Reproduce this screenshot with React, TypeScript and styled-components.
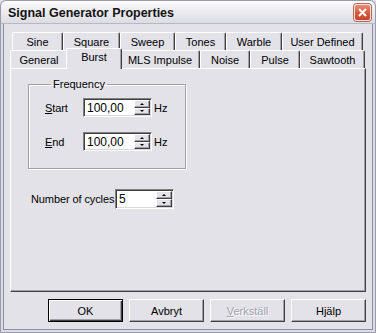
import React from "react";
import styled, { createGlobalStyle, css } from "styled-components";

const BG = "#e2e2e8";

const Global = createGlobalStyle`
  html, body { margin: 0; padding: 0; background: ${BG}; }
  body { font-family: "Liberation Sans", Arial, sans-serif; font-size: 11px; color: #000; }
  * { box-sizing: border-box; }
`;

const Window = styled.div`
  width: 376px;
  height: 333px;
  display: flex;
  flex-direction: column;
  background: ${BG};
  overflow: hidden;
`;

const TitleBar = styled.div`
  height: 24px;
  flex: none;
  display: flex;
  align-items: center;
  justify-content: space-between;
  padding: 0 4px 0 7px;
  background: linear-gradient(#fcfcfd 0%, #ededf1 45%, #dcdce3 100%);
  border: 1px solid #9a9aaa;
  border-bottom: 1px solid #b8b8c4;
  border-radius: 6px 6px 0 0;
`;

const Title = styled.div`
  font-weight: bold;
  font-size: 12.5px;
  color: #141414;
  padding-top: 1px;
`;

const CloseButton = styled.div`
  width: 17px;
  height: 17px;
  margin-top: 1px;
  border-radius: 3px;
  border: 1px solid #f3e3dd;
  background: linear-gradient(#ec8b72 0%, #d9593c 55%, #c6432a 100%);
  box-shadow: 0 0 0 1px #b5695a;
  display: flex;
  align-items: center;
  justify-content: center;
`;

const Frame = styled.div`
  flex: 1;
  display: flex;
  flex-direction: column;
  padding: 8px 9px 0 9px;
  border: 1px solid #9a9aaa;
  border-top: none;
  box-shadow: inset 2px 0 #dcdce4, inset -2px 0 #dcdce4, inset 0 -2px #dcdce4,
    inset 3px 0 #8e8ea0, inset -3px 0 #8e8ea0, inset 0 -3px #8e8ea0;
`;

const TabRow = styled.div<{ $indent: number }>`
  display: flex;
  height: 18px;
  margin-left: ${(p) => p.$indent}px;
`;

const Tab = styled.div<{ $w: number; $active?: boolean }>`
  width: ${(p) => p.$w}px;
  height: 18px;
  flex: none;
  display: flex;
  align-items: center;
  justify-content: center;
  background: ${BG};
  border-top: 1px solid #fff;
  border-left: 1px solid #fff;
  border-right: 1px solid #404040;
  box-shadow: inset -1px 0 #a0a0a8;
  border-radius: 2px 2px 0 0;
  padding-top: 1px;
  white-space: nowrap;
  ${(p) =>
    p.$active &&
    css`
      position: relative;
      z-index: 1;
      height: 21px;
      margin: -2px -2px -1px -2px;
      width: ${p.$w + 4}px;
      align-items: flex-start;
      padding-top: 2px;
    `}
`;

const Panel = styled.div`
  height: 224px;
  display: flex;
  flex-direction: column;
  align-items: flex-start;
  padding: 9px 0 0 17px;
  border-top: 1px solid #fff;
  border-left: 1px solid #fff;
  border-right: 1px solid #404040;
  border-bottom: 1px solid #404040;
  box-shadow: inset -1px -1px #a0a0a8;
`;

const Group = styled.fieldset`
  margin: 0;
  width: 158px;
  height: 91px;
  padding: 7px 0 0 16px;
  min-width: 0;
  border: 1px solid #a0a0a8;
  box-shadow: inset 1px 1px #fff, 1px 1px #fff;
  display: flex;
  flex-direction: column;
  gap: 15px;
`;

const Legend = styled.legend`
  margin-left: 6px;
  padding: 0 2px;
  line-height: 13px;
`;

const FieldRow = styled.div`
  display: flex;
  align-items: center;
  height: 19px;
`;

const Label = styled.span<{ $w: number }>`
  width: ${(p) => p.$w}px;
  flex: none;
  white-space: nowrap;
  letter-spacing: -0.1px;
`;

const Unit = styled.span`
  margin-left: 2px;
`;

const SpinBox = styled.div<{ $w: number; $h: number }>`
  width: ${(p) => p.$w}px;
  height: ${(p) => p.$h}px;
  display: flex;
  align-items: stretch;
  background: #fff;
  border-top: 1px solid #808080;
  border-left: 1px solid #808080;
  border-bottom: 1px solid #fff;
  border-right: 1px solid #fff;
  box-shadow: inset 1px 1px #404040, inset -1px -1px #d8d8de;
  padding: 1px;
`;

const SpinText = styled.div`
  flex: 1;
  display: flex;
  align-items: center;
  padding-left: 2px;
  font-size: 12px;
`;

const SpinButtons = styled.div`
  width: 16px;
  display: flex;
  flex-direction: column;
`;

const SpinButton = styled.div`
  flex: 1;
  display: flex;
  align-items: center;
  justify-content: center;
  background: ${BG};
  border-top: 1px solid #fff;
  border-left: 1px solid #fff;
  border-right: 1px solid #404040;
  border-bottom: 1px solid #404040;
  box-shadow: inset -1px -1px #a0a0a8;
`;

const Arrow = styled.div<{ $up?: boolean }>`
  width: 0;
  height: 0;
  border-left: 2px solid transparent;
  border-right: 2px solid transparent;
  ${(p) =>
    p.$up
      ? css`border-bottom: 2px solid #000;`
      : css`border-top: 2px solid #000;`}
`;

const CyclesRow = styled.div`
  display: flex;
  align-items: center;
  margin: 20px 0 0 3px;
`;

const ButtonRow = styled.div`
  display: flex;
  justify-content: flex-end;
  gap: 6px;
  margin-top: 7px;
`;

const Button = styled.div<{ $default?: boolean; $disabled?: boolean }>`
  width: 75px;
  height: 23px;
  display: flex;
  align-items: center;
  justify-content: center;
  background: ${BG};
  border: 1px solid;
  border-color: #fff #404040 #404040 #fff;
  box-shadow: inset -1px -1px #a0a0a8;
  ${(p) =>
    p.$default &&
    css`
      border-color: #000;
      box-shadow: inset 1px 1px #fff, inset -1px -1px #404040, inset -2px -2px #a0a0a8;
    `}
  ${(p) =>
    p.$disabled &&
    css`
      color: #a2a2aa;
      text-shadow: 1px 1px #fff;
    `}
`;

const Spin = ({ value, w, h }: { value: string; w: number; h: number }) => (
  <SpinBox $w={w} $h={h}>
    <SpinText>{value}</SpinText>
    <SpinButtons>
      <SpinButton>
        <Arrow $up />
      </SpinButton>
      <SpinButton>
        <Arrow />
      </SpinButton>
    </SpinButtons>
  </SpinBox>
);

const row1 = [
  { t: "Sine", w: 51 },
  { t: "Square", w: 57 },
  { t: "Sweep", w: 55 },
  { t: "Tones", w: 51 },
  { t: "Warble", w: 56 },
  { t: "User Defined", w: 81 },
];
const row2 = [
  { t: "General", w: 58 },
  { t: "Burst", w: 52, a: true },
  { t: "MLS Impulse", w: 80 },
  { t: "Noise", w: 50 },
  { t: "Pulse", w: 50 },
  { t: "Sawtooth", w: 65 },
];

export default function App() {
  return (
    <>
      <Global />
      <Window>
        <TitleBar>
          <Title>Signal Generator Properties</Title>
          <CloseButton>
            <svg width="9" height="9" viewBox="0 0 9 9">
              <path d="M1 1 L8 8 M8 1 L1 8" stroke="#fff" strokeWidth="2" />
            </svg>
          </CloseButton>
        </TitleBar>
        <Frame>
          <TabRow $indent={2}>
            {row1.map((t) => (
              <Tab key={t.t} $w={t.w}>
                {t.t}
              </Tab>
            ))}
          </TabRow>
          <TabRow $indent={0}>
            {row2.map((t) => (
              <Tab key={t.t} $w={t.w} $active={t.a}>
                {t.t}
              </Tab>
            ))}
          </TabRow>
          <Panel>
            <Group>
              <Legend>Frequency</Legend>
              <FieldRow>
                <Label $w={38}>
                  <u>S</u>tart
                </Label>
                <Spin value="100,00" w={69} h={19} />
                <Unit>Hz</Unit>
              </FieldRow>
              <FieldRow>
                <Label $w={38}>
                  <u>E</u>nd
                </Label>
                <Spin value="100,00" w={69} h={19} />
                <Unit>Hz</Unit>
              </FieldRow>
            </Group>
            <CyclesRow>
              <Label $w={84}>Number of cycles</Label>
              <Spin value="5" w={59} h={20} />
            </CyclesRow>
          </Panel>
          <ButtonRow>
            <Button $default>OK</Button>
            <Button>Avbryt</Button>
            <Button $disabled>
              <span>
                <u>V</u>erkställ
              </span>
            </Button>
            <Button>Hjälp</Button>
          </ButtonRow>
        </Frame>
      </Window>
    </>
  );
}
